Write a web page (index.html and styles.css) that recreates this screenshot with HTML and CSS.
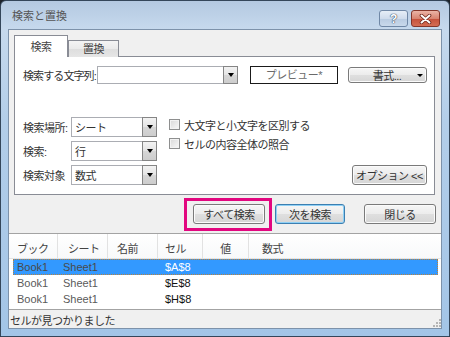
FILE: index.html
```html
<!DOCTYPE html>
<html lang="ja">
<head>
    <meta charset="UTF-8">
    <meta name="viewport" content="width=device-width, initial-scale=1.0">
    <title>検索と置換</title>
    <link rel="stylesheet" href="styles.css">
</head>
<body>
    <div class="window">
        <!-- タイトルバー -->
        <div class="titlebar">
            <span class="title">検索と置換</span>
            <div class="caption-buttons">
                <div class="cap-btn help">?</div>
                <div class="cap-btn close">
                    <svg width="13" height="10" viewBox="0 0 13 10">
                        <path d="M2.5 1.5 L10.5 8.5 M10.5 1.5 L2.5 8.5" stroke="#6b2418" stroke-width="3.6" stroke-linecap="round"/>
                        <path d="M2.5 1.5 L10.5 8.5 M10.5 1.5 L2.5 8.5" stroke="#fff" stroke-width="2" stroke-linecap="round"/>
                    </svg>
                </div>
            </div>
        </div>

        <div class="client">
            <div class="tab-area">
                <div class="tabs">
                    <div class="tab active">検索</div>
                    <div class="tab">置換</div>
                </div>

                <div class="panel">
                    <div class="find-row">
                        <span class="find-label">検索する文字列:</span>
                        <div class="combo wide"><span class="combo-text"></span><span class="drop"></span></div>
                        <div class="preview">プレビュー*</div>
                        <div class="btn format"><span class="btn-text">書式...</span><span class="small-arrow"></span></div>
                    </div>

                    <div class="options">
                        <div class="selects">
                            <div class="field">
                                <span class="field-label">検索場所:</span>
                                <div class="combo select"><span class="combo-text">シート</span><span class="drop"></span></div>
                            </div>
                            <div class="field">
                                <span class="field-label">検索:</span>
                                <div class="combo select"><span class="combo-text">行</span><span class="drop"></span></div>
                            </div>
                            <div class="field">
                                <span class="field-label">検索対象</span>
                                <div class="combo select"><span class="combo-text">数式</span><span class="drop"></span></div>
                            </div>
                        </div>

                        <div class="checks">
                            <div class="check"><span class="box"></span>大文字と小文字を区別する</div>
                            <div class="check"><span class="box"></span>セルの内容全体の照合</div>
                        </div>

                        <div class="btn option-btn">オプション &lt;&lt;</div>
                    </div>
                </div>
            </div>

            <!-- ボタン -->
            <div class="actions">
                <div class="btn find-all">すべて検索</div>
                <div class="btn find-next">次を検索</div>
                <div class="btn">閉じる</div>
            </div>

            <!-- 検索結果 -->
            <div class="results">
                <div class="list-head">
                    <span>ブック</span>
                    <span>シート</span>
                    <span>名前</span>
                    <span>セル</span>
                    <span>値</span>
                    <span>数式</span>
                </div>
                <div class="row selected">
                    <span>Book1</span><span>Sheet1</span><span></span><span class="cell">$A$8</span>
                </div>
                <div class="row">
                    <span>Book1</span><span>Sheet1</span><span></span><span class="cell">$E$8</span>
                </div>
                <div class="row">
                    <span>Book1</span><span>Sheet1</span><span></span><span class="cell">$H$8</span>
                </div>
            </div>

            <div class="status">
                <span>セルが見つかりました</span>
                <svg class="grip" width="9" height="9" viewBox="0 0 9 9">
                    <rect x="7" y="1" width="2" height="2" fill="#b5b5b5"/>
                    <rect x="4" y="4" width="2" height="2" fill="#b5b5b5"/>
                    <rect x="7" y="4" width="2" height="2" fill="#b5b5b5"/>
                    <rect x="1" y="7" width="2" height="2" fill="#b5b5b5"/>
                    <rect x="4" y="7" width="2" height="2" fill="#b5b5b5"/>
                    <rect x="7" y="7" width="2" height="2" fill="#b5b5b5"/>
                </svg>
            </div>
        </div>
    </div>
</body>
</html>
```

FILE: styles.css
```css
* {
    box-sizing: border-box;
}

body {
    margin: 0;
    background: #1e242c;
    font-family: "Liberation Sans", "Noto Sans CJK JP", sans-serif;
    font-size: 11px;
    letter-spacing: -0.5px;
    color: #333;
}

.window {
    width: 450px;
    height: 337px;
    border: 1px solid #34465a;
    border-radius: 6px 6px 0 0;
    background: linear-gradient(to bottom, #b4c9e1 0, #c6d9ed 28px, #b3cee9 120px, #a3c5e7 100%);
    padding: 0 7px 7px;
    display: flex;
    flex-direction: column;
}

.titlebar {
    height: 28px;
    display: flex;
    justify-content: space-between;
    align-items: flex-start;
}

.title {
    margin: 8px 0 0 4px;
    line-height: 15px;
    letter-spacing: 0;
    color: #555;
}

.caption-buttons {
    display: flex;
    gap: 3px;
    margin: 9px 2px 0 0;
}

.cap-btn {
    width: 29px;
    height: 17px;
    border-radius: 3px;
    display: flex;
    align-items: center;
    justify-content: center;
}

.cap-btn.help {
    border: 1px solid #7088a6;
    background: linear-gradient(#e6eef7, #cfdcec 50%, #b8cbe1 51%, #c9d9eb);
    color: #fff;
    font-weight: bold;
    font-size: 12px;
    text-shadow: 0 0 1px #3f5068, 0 0 1px #3f5068, 0 0 1px #3f5068;
}

.cap-btn.close {
    border: 1px solid #84362a;
    background: linear-gradient(#ebb4a6, #d98470 50%, #c5503a 51%, #d46d54);
}

.client {
    flex: 1;
    background: #f0f0f0;
    border: 1px solid #7d92aa;
    display: flex;
    flex-direction: column;
}

.tab-area {
    padding: 5px 6px 0 5px;
}

.tabs {
    display: flex;
    align-items: flex-end;
    height: 22px;
}

.tab {
    width: 51px;
    height: 17px;
    border: 1px solid #898c95;
    border-bottom: none;
    background: linear-gradient(#f4f4f4, #eaeaea 50%, #dedede 51%, #e6e6e6);
    text-align: center;
    line-height: 17px;
    color: #444;
}

.tab.active {
    width: 54px;
    height: 22px;
    background: #fff;
    line-height: 22px;
    position: relative;
    z-index: 1;
}

.panel {
    margin-top: -1px;
    height: 139px;
    border: 1px solid #898c95;
    background: #fff;
    padding: 9px 7px 0 8px;
}

.find-row {
    display: flex;
    align-items: center;
    height: 18px;
}

.find-label {
    width: 74px;
    white-space: nowrap;
    letter-spacing: -0.9px;
}

.combo {
    display: flex;
    border: 1px solid #abadb3;
    background: #fff;
}

.combo.wide {
    width: 141px;
    height: 18px;
}

.combo.select {
    width: 86px;
    height: 20px;
}

.combo-text {
    flex: 1;
    padding-left: 3px;
    display: flex;
    align-items: center;
    color: #333;
}

.drop {
    width: 15px;
    border: 1px solid #858585;
    margin: -1px -1px -1px 0;
    background: linear-gradient(#f2f2f2, #e4e4e4 50%, #d6d6d6 51%, #cdcdcd);
    display: flex;
    align-items: center;
    justify-content: center;
}

.drop::after {
    content: "";
    border-left: 3.5px solid transparent;
    border-right: 3.5px solid transparent;
    border-top: 4px solid #000;
}

.preview {
    width: 88px;
    height: 18px;
    margin-left: 12px;
    border: 1px solid #1a1a1a;
    text-align: center;
    line-height: 16px;
    color: #6a6a6a;
}

.btn {
    border: 1px solid #7a7a7a;
    border-radius: 3px;
    background: linear-gradient(#f6f6f6 0, #ececec 50%, #dfdfdf 51%, #d6d6d6 100%);
    box-shadow: inset 0 0 0 1px #fbfbfb;
    display: flex;
    align-items: center;
    justify-content: center;
    color: #333;
    white-space: nowrap;
}

.btn.format {
    width: 79px;
    height: 16px;
    margin-left: 10px;
    padding: 0 3px 0 8px;
}

.btn-text {
    flex: 1;
    text-align: center;
}

.small-arrow {
    border-left: 3px solid transparent;
    border-right: 3px solid transparent;
    border-top: 3px solid #000;
}

.options {
    display: flex;
    margin-top: 33px;
}

.selects {
    display: flex;
    flex-direction: column;
    gap: 4px;
}

.field {
    display: flex;
    align-items: center;
}

.field-label {
    width: 48px;
    white-space: nowrap;
}

.checks {
    margin-left: 12px;
    display: flex;
    flex-direction: column;
    gap: 4px;
}

.check {
    height: 15px;
    display: flex;
    align-items: center;
    gap: 4px;
    white-space: nowrap;
}

.box {
    width: 11px;
    height: 11px;
    border: 1px solid #8e8f8f;
    background: linear-gradient(135deg, #d8d8d8, #f8f8f8);
    box-shadow: inset 0 0 0 1px #f2f2f2;
}

.option-btn {
    margin-left: auto;
    align-self: flex-end;
    width: 75px;
    height: 20px;
}

.actions {
    display: flex;
    justify-content: flex-end;
    margin-top: 9px;
    padding-right: 5px;
}

.actions .btn {
    width: 72px;
    height: 20px;
}

.actions .find-all {
    position: relative;
    margin-right: 10px;
}

.find-all::after {
    content: "";
    position: absolute;
    left: -10px;
    top: -7px;
    right: -8px;
    bottom: -8px;
    border: 3px solid #e2077f;
}

.actions .find-next {
    width: 70px;
    margin-right: 19px;
    border-color: #3c7fb1;
    box-shadow: inset 0 0 0 1px #8fd0f5;
}

.results {
    margin-top: 9px;
    height: 77px;
    background: #fff;
    border-top: 1px solid #a3a3a3;
    border-bottom: 1px solid #a3a3a3;
}

.list-head {
    display: flex;
    height: 25px;
    border-bottom: 1px solid #e4e4e4;
    background: linear-gradient(#fff, #f8f9fa);
    color: #444;
}

.list-head span {
    display: flex;
    align-items: center;
    padding-top: 4px;
    border-right: 1px solid #e2e2e2;
}

.list-head span:nth-child(1) { width: 49px; padding-left: 8px; }
.list-head span:nth-child(2) { width: 50px; padding-left: 10px; }
.list-head span:nth-child(3) { width: 50px; padding-left: 9px; }
.list-head span:nth-child(4) { width: 45px; padding-left: 7px; }
.list-head span:nth-child(5) { width: 46px; justify-content: center; }
.list-head span:nth-child(6) { flex: 1; padding-left: 13px; border-right: none; }

.row {
    display: flex;
    align-items: center;
    height: 16px;
    margin: 0 3px 0 4px;
    letter-spacing: 0;
    color: #5a5a5a;
}

.row span:nth-child(1) { width: 46px; padding-left: 4px; }
.row span:nth-child(2) { width: 50px; padding-left: 4px; }
.row span:nth-child(3) { width: 51px; }

.row .cell {
    padding-left: 5px;
    color: #111;
}

.row.selected {
    background: #3399ff;
    color: #4a4a4a;
    outline: 1px dotted #b7823e;
    outline-offset: -1px;
}

.row.selected .cell {
    color: #fff;
}

.status {
    flex: 1;
    display: flex;
    align-items: center;
    padding: 1px 0 0 1px;
    color: #333;
}

.grip {
    margin-left: auto;
    align-self: flex-end;
    margin-bottom: 1px;
}
```
